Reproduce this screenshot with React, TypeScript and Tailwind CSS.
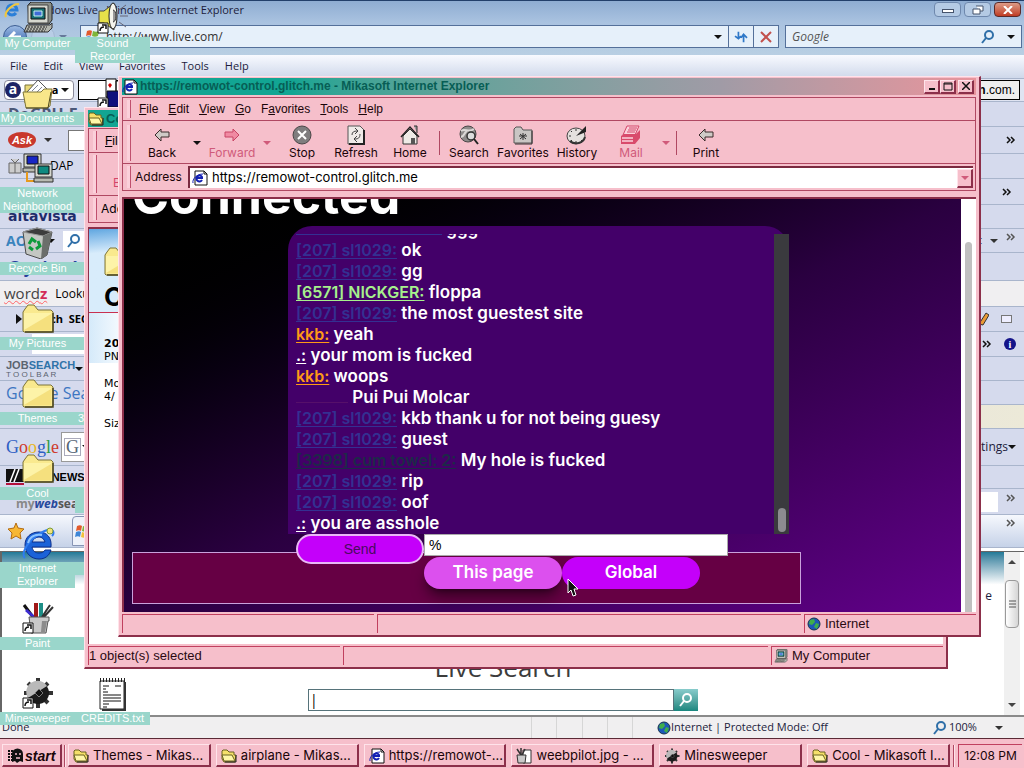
import type { ReactNode } from "react"

const ui = "font-['Liberation_Sans',Arial,sans-serif]"
const inter = "font-['Inter',sans-serif]"
const segoe = "font-['Open_Sans','Noto_Sans',sans-serif]"

/* ---------- icons ---------- */

function FolderIcon({ size = 32 }: { size?: number }) {
    return (
        <svg width={size} height={size} viewBox="0 0 32 32">
            <path d="M1 10l2-3 3-4h6l4 5h13l2 2v19l-1 1H2l-1-1z" fill="#f9e98e" stroke="#7d7438" />
            <path d="M2 11h27v17H2z" fill="#fdf3a8" />
            <path d="M2 28L29 12v16z" fill="#f1d76c" opacity=".7" />
            <path d="M31 11v19H3" fill="none" stroke="#4b4620" strokeWidth="1.5" />
        </svg>
    )
}

function OpenFolderIcon() {
    return (
        <svg width="16" height="16" viewBox="0 0 16 16">
            <path d="M1 3l1-1h4l2 2h5v3h2l-1 7H3L1 11z" fill="#f6e06a" stroke="#6b6220" />
            <path d="M3 13L1 7h10l3 6z" fill="#fff7a8" stroke="#6b6220" />
            <path d="M15 7v7H4" fill="none" stroke="#222" />
        </svg>
    )
}

function DocsIcon() {
    return (
        <svg width="32" height="32" viewBox="0 0 32 32">
            <path d="M3 8h10l2 4v14H3z" fill="#e9d978" stroke="#7d7438" />
            <path d="M5 15L16 3l12 12-8 10z" fill="#fff" stroke="#555" />
            <path d="M10 14l6-6m-3 9l7-7m-4 9l6-6" stroke="#7d8496" />
            <path d="M1 15h18l3-3h8l-2 17-3 2H4z" fill="#f8e68a" stroke="#7d7438" />
            <path d="M4 31h22l3-16" fill="none" stroke="#4b4620" />
        </svg>
    )
}

function ComputerIcon({ size = 32 }: { size?: number }) {
    return (
        <svg width={size} height={size} viewBox="0 0 32 32">
            <path d="M6 3l3-3h19l2 2v16l-3 4H7z" fill="#8b8f88" stroke="#222" />
            <path d="M6 3h20v18H6z" fill="#d6d8cf" stroke="#444" />
            <path d="M9 6h14v11H9z" fill="#166f74" stroke="#111" />
            <path d="M12 9h8v5h-8z" fill="#3e6bd6" stroke="#c8f4f0" />
            <path d="M5 23h23l2-2v5l-4 4H2z" fill="#b3b5ad" stroke="#333" />
            <path d="M6 25h19M5 27h19M4 29h19" stroke="#222" strokeDasharray="2 1" />
        </svg>
    )
}

function NetworkIcon() {
    return (
        <svg width="32" height="32" viewBox="0 0 32 32">
            <path d="M2 2h17v13H2z" fill="#d6d8cf" stroke="#333" />
            <path d="M5 4h11v8H5z" fill="#1726c4" stroke="#111" />
            <path d="M1 16h18v4H1z" fill="#b8bab2" stroke="#333" />
            <path d="M5 20v9h9" fill="none" stroke="#e79a1c" strokeWidth="2" />
            <path d="M13 12h17v13H13z" fill="#d6d8cf" stroke="#333" />
            <path d="M16 14h11v8H16z" fill="#0f8a80" stroke="#111" />
            <path d="M12 26h19v4H12z" fill="#b8bab2" stroke="#333" />
        </svg>
    )
}

function RecycleIcon() {
    return (
        <svg width="32" height="32" viewBox="0 0 32 32">
            <path d="M1 5L15 1l15 4-5 23-6 4-15-5z" fill="#c4c7c3" stroke="#4b4b4b" />
            <path d="M1 5l14-4 15 4-9 4z" fill="#3c3c3c" stroke="#999" />
            <path d="M21 9l9-4-5 23-6 4z" fill="#6b6e6b" />
            <path d="M7 17l3-5 4 3M16 14l2 5-4 3M11 23l-4-3" fill="none" stroke="#0c9a3a" strokeWidth="3" />
        </svg>
    )
}

function BigIeIcon() {
    return (
        <svg width="34" height="34" viewBox="0 0 34 34">
            <path d="M30 20H11c1 4 3 6 7 6 3 0 5-1 6-3h6c-2 6-6 9-12 9C10 32 4 26 4 18S10 5 18 5s13 6 12 15zM11 15h13c-1-3-3-5-6-5s-6 2-7 5z" fill="#1b62d8" stroke="#0c2f8c" />
            <path d="M4 31c-4-4 1-14 10-21S30 1 32 4c1 2 0 4-1 5" fill="none" stroke="#2f7cf0" strokeWidth="2" />
            <path d="M7 16C9 9 15 7 21 8" fill="none" stroke="#8cc3ff" strokeWidth="2" />
            <circle cx="29" cy="4" r="3" fill="#f4e27a" stroke="#7a9d3a" />
        </svg>
    )
}

function PageIeIcon({ size = 16 }: { size?: number }) {
    return (
        <svg width={size} height={size} viewBox="0 0 16 16">
            <path d="M3 1h9l3 3v11H3z" fill="#fff" stroke="#111" />
            <path d="M12 1v3h3" fill="none" stroke="#111" />
            <path d="M10 10a3 3 0 1 1 0-3v1H4" fill="none" stroke="#1320b4" strokeWidth="2" />
            <path d="M1 13C0 9 5 4 11 4" fill="none" stroke="#1320b4" />
        </svg>
    )
}

function IeSmall() {
    return (
        <svg width="16" height="16" viewBox="0 0 16 16">
            <path d="M12 11a5 5 0 1 1 1-3H4" fill="none" stroke="#2b7fd8" strokeWidth="3" />
            <path d="M2 15C0 11 7 2 15 2" fill="none" stroke="#f0c63c" strokeWidth="2" />
        </svg>
    )
}

function ShortcutMark() {
    return (
        <g>
            <path d="M0 21h10v10H0z" fill="#fff" stroke="#111" />
            <path d="M2 29c0-3 1-4 4-4M4 23h4v4" fill="none" stroke="#111" strokeWidth="1.5" />
        </g>
    )
}

function SpeakerIcon() {
    return (
        <svg width="32" height="32" viewBox="-1 0 32 32">
            <path d="M1 9h5l10-8v27l-10-7H1z" fill="#e6e04a" stroke="#444" />
            <ellipse cx="15" cy="14" rx="4" ry="13" fill="#f4f4ec" stroke="#222" />
            <path d="M15 8a3 6 0 0 1 0 12" fill="#999" stroke="#333" />
            <path d="M21 8l7-5M22 14h8M21 20l7 5" stroke="#667" />
            <ShortcutMark />
        </svg>
    )
}

function CardsIcon() {
    return (
        <svg width="32" height="32" viewBox="-1 0 32 32">
            <path d="M8 2h10v18H8zM18 4h11v14H18z" fill="#fff" stroke="#111" />
            <path d="M10 8l2-2 2 2-2 3zM20 8l2-2 2 2-2 3z" fill="#c00" />
            <path d="M9 14h20v16H9z" fill="#10107c" stroke="#111" />
            <ShortcutMark />
        </svg>
    )
}

function PaintIcon() {
    return (
        <svg width="32" height="32" viewBox="-1 0 32 32">
            <path d="M1 3l9 12" stroke="#111" strokeWidth="3" />
            <path d="M3 8l9 8" stroke="#3c2bd0" strokeWidth="3" />
            <path d="M13 1v14" stroke="#a01818" strokeWidth="4" />
            <path d="M18 1v14" stroke="#1e8f87" strokeWidth="4" />
            <path d="M30 5L20 16M27 3l-8 12" stroke="#333" strokeWidth="2" />
            <path d="M6 15h20v4h-1l-2 12H8z" fill="#c9c9c9" stroke="#555" />
            <path d="M19 19h5l-2 11h-4z" fill="#8c8c8c" />
            <ShortcutMark />
        </svg>
    )
}

function MineIcon({ size = 32, mark = true }: { size?: number; mark?: boolean }) {
    return (
        <svg width={size} height={size} viewBox="-1 0 32 32">
            <path d="M15 1v30M1 16h29M5 6l20 20M25 6L5 26" stroke="#333" strokeWidth="4" />
            <circle cx="15" cy="16" r="11" fill="#1c1c1c" />
            <path d="M5 21A11 11 0 0 1 24 9z" fill="#b9b9b9" />
            <path d="M12 16l4-4 4 4-4 4z" fill="#111" stroke="#777" />
            {mark && <ShortcutMark />}
        </svg>
    )
}

function NotepadIcon() {
    return (
        <svg width="32" height="34" viewBox="0 0 32 34">
            <path d="M3 4h24v28H3z" fill="#fff" stroke="#222" />
            <path d="M28 5v28H5" fill="none" stroke="#333" strokeWidth="2" />
            <path d="M3 3h25" stroke="#222" strokeWidth="4" strokeDasharray="1 2" />
            <path d="M6 9h6M18 9h6M6 12h3M6 15h5M6 18h18M6 21h18M6 24h18M6 27h6M6 30h4" stroke="#111" />
        </svg>
    )
}

function ArrowIcon({ flip = false, fill = "#cfcac6", line = "#3a2a2a" }: { flip?: boolean; fill?: string; line?: string }) {
    return (
        <svg width="16" height="20" viewBox="0 0 16 20">
            <path d={flip ? "M15 10L9 4v3H1v5h8v4z" : "M1 10l6-6v3h8v5H7v4z"} fill={fill} stroke={line} />
        </svg>
    )
}

function StopIcon() {
    return (
        <svg width="20" height="20" viewBox="0 0 20 20">
            <circle cx="10" cy="10" r="9" fill="#7f7d7e" stroke="#4b4647" />
            <path d="M6 6l8 8M14 6l-8 8" stroke="#fff" strokeWidth="2" />
        </svg>
    )
}

function RefreshIcon() {
    return (
        <svg width="18" height="20" viewBox="0 0 18 20">
            <path d="M1 1h12l4 4v14H1z" fill="#efebe8" stroke="#555" />
            <path d="M17 5v14H2" fill="none" stroke="#222" strokeWidth="2" />
            <path d="M5 10c0-3 2-4 5-4M8 3l3 3-3 3M13 9c0 4-2 5-5 5M10 11l-3 3 3 3" fill="none" stroke="#444" />
        </svg>
    )
}

function HomeIcon() {
    return (
        <svg width="20" height="20" viewBox="0 0 20 20">
            <path d="M3 11v8h14v-8l-7-7z" fill="#eeeae6" stroke="#333" />
            <path d="M14 1h3v7" fill="#999" stroke="#333" />
            <path d="M1 12l9-10 9 10" fill="none" stroke="#222" strokeWidth="1.5" />
            <path d="M11 13h4v6h-4z" fill="#555" />
        </svg>
    )
}

function SearchToolIcon() {
    return (
        <svg width="20" height="20" viewBox="0 0 20 20">
            <circle cx="9" cy="9" r="8" fill="#8f8c8b" stroke="#4b4647" />
            <path d="M2 6c4-3 8 2 13-2M2 12c4-1 3-5 6-6" fill="none" stroke="#dcd9d7" strokeWidth="2" />
            <circle cx="12" cy="11" r="4" fill="#ddd" stroke="#333" strokeWidth="1.5" />
            <path d="M15 14l4 5" stroke="#222" strokeWidth="2" />
        </svg>
    )
}

function FavIcon() {
    return (
        <svg width="20" height="20" viewBox="0 0 20 20">
            <path d="M1 18V4l2-2h5l2 3h9v13z" fill="#c9c6c4" stroke="#555" />
            <path d="M19 6v13H2" fill="none" stroke="#333" />
            <path d="M10 8v7M6 11h8M7 9l6 5M13 9l-6 5" stroke="#333" />
        </svg>
    )
}

function HistoryIcon() {
    return (
        <svg width="22" height="20" viewBox="0 0 22 20">
            <ellipse cx="10" cy="11" rx="9" ry="8" fill="#e4e1de" stroke="#444" />
            <path d="M19 12a9 8 0 0 1-15 4" fill="none" stroke="#333" strokeWidth="2" />
            <path d="M10 11L20 1v6z" fill="#222" />
            <path d="M10 4v2M3 11h2M10 16v2M5 6l1 1M5 16l1-1M15 15l1 1" stroke="#333" />
        </svg>
    )
}

function MailIcon() {
    return (
        <svg width="22" height="20" viewBox="0 0 22 20">
            <path d="M7 1h12l-4 9H3z" fill="#fbd3dc" stroke="#d4466a" />
            <path d="M9 3h8M8 5h8M7 7h8" stroke="#d4466a" />
            <path d="M1 11l3-2h12l4-4v8l-5 6H1z" fill="#d94b6c" />
            <path d="M2 13h11M2 16h11" stroke="#fbd3dc" strokeWidth="1.5" />
        </svg>
    )
}

function GlobeIcon({ size = 14 }: { size?: number }) {
    return (
        <svg width={size} height={size} viewBox="0 0 14 14">
            <circle cx="7" cy="7" r="6" fill="#1c58b8" stroke="#16324c" />
            <path d="M3 3l4-1 1 3-3 3-3-1zM9 6l3 1-2 5-3-2z" fill="#3fae4a" />
        </svg>
    )
}

function Magnifier({ stroke = "#2f6fa8" }: { stroke?: string }) {
    return (
        <svg width="14" height="14" viewBox="0 0 14 14">
            <circle cx="8" cy="5" r="4" fill="none" stroke={stroke} strokeWidth="2" />
            <path d="M5 8l-4 5" stroke={stroke} strokeWidth="2" />
        </svg>
    )
}

function WinFlag() {
    return (
        <svg width="15" height="15" viewBox="0 0 15 15">
            <path d="M2 2c2-1 4-1 5 0L6 7c-1-1-3-1-5 0z" fill="#e2592c" />
            <path d="M8 2c2 1 4 1 6 0l-1 5c-2 1-4 1-6 0z" fill="#7fb53a" />
            <path d="M1 8c2-1 4-1 5 0l-1 5c-1-1-3-1-5 0z" fill="#3f86d6" />
            <path d="M7 8c2 1 4 1 6 0l-1 5c-2 1-4 1-6 0z" fill="#f3c23a" />
        </svg>
    )
}

function Caret({ color = "#111" }: { color?: string }) {
    return (
        <svg width="8" height="4" viewBox="0 0 8 4">
            <path d="M0 0h8L4 4z" fill={color} />
        </svg>
    )
}

/* ---------- wallpaper: the browser behind everything ---------- */

function Row({ h, children, right, bg = "bg-[#d5daed]" }: { h: string; children?: ReactNode; right?: ReactNode; bg?: string }) {
    return (
        <div className={`flex shrink-0 items-center justify-between overflow-hidden border-b border-[#a9b5cc] ${h} ${bg}`}>
            <div className="flex items-center whitespace-nowrap pl-2">{children}</div>
            <div className="flex items-center gap-2 whitespace-nowrap pr-2">{right}</div>
        </div>
    )
}

function Chevron({ color = "#111" }: { color?: string }) {
    return (
        <svg width="10" height="8" viewBox="0 0 10 8">
            <path d="M1 1l3 3-3 3M5 1l3 3-3 3" fill="none" stroke={color} strokeWidth="1.5" />
        </svg>
    )
}

function Wallpaper() {
    return (
        <div className={`absolute inset-0 flex flex-col bg-white text-[11px] text-[#1c1c3c] ${segoe}`}>
            <div className="flex h-[22px] shrink-0 items-start justify-between border-t border-[#23406b] bg-linear-to-b from-[#8fadd2] to-[#a9c2e0]">
                <div className="flex items-center gap-2 pt-px pl-1">
                    <IeSmall />
                    <span>Windows Live - Windows Internet Explorer</span>
                </div>
                <div className="flex gap-[3px] pt-px pr-[3px]">
                    <button aria-label="Minimize" className="flex h-[15px] w-[27px] items-end justify-center rounded-sm border border-[#6e88ad] bg-[#b4cae4] pb-[3px]">
                        <span className="h-1 w-3 border border-[#45536b] bg-white" />
                    </button>
                    <button aria-label="Restore" className="flex h-[15px] w-[27px] items-center justify-center rounded-sm border border-[#6e88ad] bg-[#b4cae4]">
                        <svg width="12" height="10" viewBox="0 0 12 10"><path d="M4 1h7v5H8M1 4h7v5H1z" fill="#fff" stroke="#45536b" /></svg>
                    </button>
                    <button aria-label="Close" className="flex h-[15px] w-[27px] items-center justify-center rounded-sm border border-[#5a2a2a] bg-linear-to-b from-[#dc9a86] to-[#bf3a22]">
                        <svg width="10" height="8" viewBox="0 0 10 8"><path d="M1 0l8 8M9 0L1 8" stroke="#fff" strokeWidth="2" /></svg>
                    </button>
                </div>
            </div>
            <div className="flex h-[33px] shrink-0 items-center gap-1.5 bg-linear-to-b from-[#a9c2e0] to-[#b9cfe3] pr-0.5 pb-1">
                <div className="flex w-[74px] items-center gap-1 pl-[3px]">
                    <span className="flex size-6 items-center justify-center rounded-full border border-[#3b5d93] bg-linear-to-b from-[#9dbbe4] to-[#2452a0]">
                        <svg width="14" height="12" viewBox="0 0 14 12"><path d="M7 1L2 6l5 5M2 6h11" fill="none" stroke="#fff" strokeWidth="3" /></svg>
                    </span>
                    <span className="size-6 rounded-full border border-[#a3b7d2] bg-[#b8cde6]" />
                    <Caret color="#66799a" />
                </div>
                <div className="flex h-[23px] flex-1 items-center border border-[#54709a] bg-[#e6f0fa]">
                    <div className="flex flex-1 items-center gap-1.5 pl-1 text-xs">
                        <WinFlag />
                        <span className="text-[#333]">http://www.live.com/</span>
                    </div>
                    <span className="pr-1.5"><Caret /></span>
                    <button aria-label="Reload" className="flex h-full w-[25px] items-center justify-center border-l border-[#54709a]">
                        <svg width="14" height="12" viewBox="0 0 16 14"><path d="M5 1v8M1 6l4 3 3-3M11 13V5M8 8l3-4 4 4" fill="none" stroke="#2f78c8" strokeWidth="2" /></svg>
                    </button>
                    <button aria-label="Stop" className="flex h-full w-[25px] items-center justify-center border-l border-[#54709a]">
                        <svg width="12" height="12" viewBox="0 0 12 12"><path d="M1 1l10 10M11 1L1 11" stroke="#c2504c" strokeWidth="2" /></svg>
                    </button>
                </div>
                <div className="flex h-[23px] w-[237px] items-center gap-3 border border-[#54709a] bg-[#e6f0fa] px-1.5 text-xs">
                    <input aria-label="Search" placeholder="Google" className="min-w-0 flex-1 italic placeholder:text-[#555]" />
                    <Magnifier />
                    <Caret />
                </div>
            </div>
            <div className="flex h-[24px] shrink-0 items-center gap-4 border-b border-[#a9b5cc] bg-linear-to-b from-[#f8faff] to-[#cfd8ea] pl-[10px]">
                <span>File</span><span>Edit</span><span>View</span><span>Favorites</span><span>Tools</span><span>Help</span>
            </div>
            <Row h="h-[23px]" bg="bg-[#dfe4f2]" right={<span className={`-mr-1 flex h-5 items-center border border-black bg-[#eee] px-1 text-[12px] font-bold text-black ${ui}`}>amazon<span className="font-normal">.com.</span></span>}>
                <div className="-ml-1 flex h-5 w-[70px] items-center justify-between rounded border border-[#889] bg-white pr-1">
                    <span className="flex size-4 items-center justify-center rounded-full bg-[#1d2466] pb-0.5 text-sm leading-none font-bold text-white">a</span>
                    <b className="pl-7 text-black">a</b>
                    <Caret />
                </div>
                <div className="ml-1 h-5 w-10 border border-black bg-white" />
            </Row>
            <Row h="h-[25px]"><b className="text-base leading-4 text-[#4b5878]">DoGPU-E</b></Row>
            <Row h="h-[27px]" right={<Chevron />}>
                <span className={`flex h-4 w-7 items-center justify-center rounded-[50%] bg-[#c8382c] text-[11px] font-bold text-white italic ${ui}`}>Ask</span>
                <span className="px-2"><Caret color="#333" /></span>
                <span className="ml-2 h-[21px] w-10 border border-[#777] bg-white" />
            </Row>
            <Row h="h-[25px]">
                <svg width="14" height="16" viewBox="0 0 14 16"><path d="M1 5h12v10H1zM7 5v10M3 1l4 4 4-4" fill="#ccc" stroke="#666" /></svg>
                <span className="pl-[28px] text-xs text-black">DAP</span>
            </Row>
            <Row h="h-[26px]" right={<span className="pr-1"><Chevron /></span>}>
                <svg width="80" height="20" viewBox="0 0 80 20"><path d="M0 5h12l-6 4zM18 5h12v5H18z" fill="#c8202c" /><path d="M69 9l3-3 3 3" fill="none" stroke="#222" /></svg>
            </Row>
            <Row h="h-[24px]"><b className="text-[14px] text-[#1f2d6b] font-['DejaVu_Sans',sans-serif]">altavista</b></Row>
            <Row h="h-[24px]" right={<><span>Text</span><Caret color="#333" /><span className="pb-2"><Chevron color="#555" /></span></>}>
                <b className="-ml-0.5 text-[14px] text-[#3a84bd]">AOL</b>
                <span className="pr-2 pl-3"><Caret /></span>
                <span className="flex h-5 w-20 items-center bg-white pl-1"><Magnifier /></span>
            </Row>
            <Row h="h-[28px]"><b className="text-base leading-4 text-[#26409c]">G yahoo!</b></Row>
            <Row h="h-[26px]" bg="bg-[#f0eff1]">
                <span className="-ml-1 text-[15px] text-[#444] underline decoration-red-400 decoration-wavy decoration-1">word<b className="text-[#d32c58]">z</b></span>
                <span className="pl-2 text-xs text-black">Lookup</span>
            </Row>
            <Row h="h-[25px]" right={<>
                <svg width="10" height="16" viewBox="0 0 10 16"><path d="M0 13l7-11 3 2-6 10z" fill="#e99a35" stroke="#333" /></svg>
                <span className="mx-1 h-2 w-[11px] border border-[#777] bg-[#eef]" />
            </>}>
                <svg className="ml-2" width="6" height="10" viewBox="0 0 6 10"><path d="M0 0l6 5-6 5z" fill="#111" /></svg>
                <b className="pl-1 text-black">Search&nbsp; SEO</b>
            </Row>
            <Row h="h-[25px]" right={<><Chevron /><span className="ml-1 flex size-3 items-center justify-center rounded-full bg-[#14148a] text-[10px] font-bold text-white font-['Liberation_Serif',serif]">i</span></>}>
                <span className="ml-6 h-5 w-32 bg-white" />
            </Row>
            <Row h="h-[24px]">
                <div className={`-ml-0.5 text-[#5b6470] ${ui}`}>
                    <div className="text-[11px] leading-3 font-bold">JOB<span className="text-[#2f73a8]">SEARCH</span></div>
                    <div className="text-[8px] leading-2">T O O L B A R</div>
                </div>
                <span className="pr-2"><Caret /></span>
                <span className="h-5 w-20 bg-white" />
            </Row>
            <Row h="h-[24px]"><span className="-ml-0.5 text-base leading-5 text-[#3d76c2]">Google Search</span></Row>
            <Row h="h-[24px]" bg="bg-linear-to-r from-[#d5daed] to-[#ece9d8]" />
            <Row h="h-[37px]" right={<span className="flex items-center text-xs">Settings<Caret /></span>}>
                <span className="-ml-0.5 text-[18px] font-['Liberation_Serif',serif]">
                    <span className="text-[#2f5fc4]">G</span><span className="text-[#cf3b2c]">o</span><span className="text-[#e8b51e]">o</span><span className="text-[#2f5fc4]">g</span><span className="text-[#2f9a48]">l</span><span className="text-[#cf3b2c]">e</span>
                </span>
                <span className="ml-0.5 flex h-[30px] w-20 items-center border border-[#999] bg-white pl-0.5">
                    <span className="border border-[#aab] px-px text-[18px] leading-4 text-[#567] font-['Liberation_Serif',serif]">G</span>
                    <span className="pl-px"><Caret /></span>
                </span>
            </Row>
            <Row h="h-[23px]">
                <svg className="-ml-0.5" width="18" height="17" viewBox="0 0 18 17"><path d="M0 0h18v13H0z" fill="#111" /><path d="M4 13L9 0M8 13l5-13" stroke="#fff" strokeWidth="1.5" /><path d="M0 14h18v2H0z" fill="#b3123c" /></svg>
                <b className={`pl-0.5 text-[11px] text-black ${ui}`}>FOX NEWS</b>
            </Row>
            <Row h="h-[26px]" right={<><span className="h-5 w-16 bg-white" /><span className="pb-2"><Chevron color="#555" /></span></>}>
                <span className="pt-1 pl-2 text-xs font-bold text-[#888]">my<i className="text-[#27489c]">web</i><span className="text-[#555]">search</span></span>
            </Row>
            <Row h="h-[33px]" bg="bg-linear-to-b from-[#f6f8fd] to-[#c6d2e8]" right={<span className="pb-4"><Chevron color="#555" /></span>}>
                <svg width="16" height="18" viewBox="0 0 16 16"><path d="M8 0l2 5 6 1-4 4 1 6-5-3-5 3 1-6-4-4 6-1z" fill="#f7b733" stroke="#b36b12" /></svg>
                <span className="ml-12 flex h-[30px] w-60 items-center rounded-t border border-[#8794b4] bg-[#eef2fa] pl-0.5"><WinFlag /></span>
            </Row>
            <div className="mt-[3px] flex min-h-0 flex-1 border-t border-l-2 border-[#666] bg-white">
                <div className="flex min-w-0 flex-1 flex-col items-center overflow-hidden bg-linear-to-b from-[#1f7a98] from-0% via-white via-20% to-white">
                    <div className={`self-end pt-9 pr-3 text-xs ${segoe}`}>e</div>
                    <div className="mt-auto text-[26px] leading-7 text-[#3c3c3c]">Live Search</div>
                    <div className="mt-2 mb-1 flex h-[22px] w-[390px]">
                        <input aria-label="Live Search" className="min-w-0 flex-1 border border-[#56737a] px-px text-sm text-black" defaultValue="|" />
                        <button aria-label="Go" className="flex w-6 items-center justify-center bg-linear-to-b from-[#8cc] to-[#17877f]"><Magnifier stroke="#fff" /></button>
                    </div>
                </div>
                <div className="mr-1 flex w-4 flex-col items-center bg-[#f0f0f0] py-2">
                    <span className="rotate-180"><Caret color="#444" /></span>
                    <span className="mt-4 flex h-12 w-3.5 items-center justify-center rounded-sm border border-[#999] bg-linear-to-r from-white to-[#d5d5d5]">
                        <svg width="7" height="8" viewBox="0 0 7 8"><path d="M0 1h7M0 4h7M0 7h7" stroke="#555" /></svg>
                    </span>
                    <span className="mt-auto"><Caret color="#444" /></span>
                </div>
            </div>
            <div className="flex h-[23px] shrink-0 items-center border-t-2 border-[#8a8a8a] bg-[#f0eff0]">
                <span className="flex-1 pl-0.5">Done</span>
                <div className="flex h-full w-[150px] divide-x divide-[#d6d6d6]">
                    <span className="flex-1" /><span className="flex-1" /><span className="flex-1" /><span className="flex-1" /><span className="flex-1" /><span className="flex-1" />
                </div>
                <div className="flex w-[276px] items-center"><GlobeIcon /><span>Internet | Protected Mode: Off</span></div>
                <div className="flex w-[91px] items-center gap-0.5"><Magnifier /><span className="pr-4">100%</span><Caret color="#333" /></div>
            </div>
        </div>
    )
}

/* ---------- desktop icons ---------- */

type DesktopItem = { label: string; icon?: ReactNode; lines?: number }

const desktopItems: DesktopItem[] = [
    { label: "My Computer", icon: <ComputerIcon /> },
    { label: "My Documents", icon: <DocsIcon /> },
    { label: "Network Neighborhood", icon: <NetworkIcon /> },
    { label: "Recycle Bin", icon: <RecycleIcon /> },
    { label: "My Pictures", icon: <FolderIcon /> },
    { label: "Themes", icon: <FolderIcon /> },
    { label: "Cool", icon: <FolderIcon /> },
    { label: "Internet Explorer", icon: <BigIeIcon /> },
    { label: "Paint", icon: <PaintIcon /> },
    { label: "Minesweeper", icon: <MineIcon /> },
    { label: "Sound Recorder", icon: <SpeakerIcon /> },
    { label: "", icon: <CardsIcon /> },
    { label: "", lines: 2 },
    { label: "" },
    { label: "" },
    { label: "3D FlowerBox" },
    { label: "", lines: 2 },
    { label: "" },
    { label: "" },
    { label: "CREDITS.txt", icon: <NotepadIcon /> },
]

function DesktopIcons() {
    return (
        <div className="absolute top-0 left-0 grid auto-cols-[75px] grid-flow-col grid-rows-[repeat(10,75px)]">
            {desktopItems.map((item, i) => (
                <button key={i} className={`flex flex-col items-center text-[11px] leading-[13px] font-medium text-white ${ui}`}>
                    <span className="flex h-[37px] shrink-0 items-start justify-center pt-0.5">{item.icon}</span>
                    <span className={`w-full bg-[#9ad6cb] ${item.label.includes(" R") ? "px-3" : ""} ${item.lines === 2 ? "min-h-[26px]" : "min-h-[13px]"}`}>{item.label}</span>
                </button>
            ))}
        </div>
    )
}

/* ---------- pink windows ---------- */

const raised = "border-t border-l border-t-[#ffe3ea] border-l-[#ffe3ea] border-r-2 border-b-2 border-r-[#8c2f4a] border-b-[#8c2f4a] bg-[#f6bfcb]"

function Grip() {
    return <span className="mr-2 w-1 self-stretch border-r border-[#c0506e] bg-[#fbd0da]" />
}

function StatusBar({ first, icon, zone }: { first?: string; icon: ReactNode; zone: string }) {
    const cell = "flex h-[19px] items-center overflow-hidden border-t border-l border-[#c0405f]"
    return (
        <div className={`flex shrink-0 gap-[3px] px-[3px] py-0.5 text-[13px] text-[#2a0a12] ${ui}`}>
            <div className={`w-[252px] ${cell}`}>{first}</div>
            <div className={`flex-1 ${cell}`} />
            <div className={`w-[172px] gap-1 pl-0.5 ${cell}`}>{icon}{zone}</div>
        </div>
    )
}

function FolderWindow() {
    return (
        <div className={`absolute top-[107px] right-[76px] bottom-[69px] left-[84px] flex flex-col overflow-hidden ${raised}`}>
            <div className={`mx-[3px] mt-0.5 flex h-[17px] shrink-0 items-center gap-0.5 bg-[#12a593] text-[13px] font-bold text-[#075e55] ${ui}`}>
                <OpenFolderIcon />Cool
            </div>
            <div className="mx-[3px] mt-px flex shrink-0 flex-col border border-[#b04862]">
                <div className={`flex h-[24px] items-center border-b border-[#b04862] py-0.5 pl-1 text-xs ${ui}`}><Grip /><u>F</u>ile</div>
                <div className={`flex h-[43px] items-end border-b border-[#b04862] py-0.5 pl-1 text-xs text-[#d4466a] ${inter}`}><Grip /><span className="pb-0.5 pl-2">Back</span></div>
                <div className={`flex h-[26px] items-center py-0.5 pl-1 text-xs ${inter}`}><Grip /><span className="-ml-1">Address</span></div>
            </div>
            <div className="mx-[3px] mt-1 min-h-0 flex-1 overflow-hidden border-t-2 border-l border-[#8c2f4a] bg-white text-[11px] leading-[13px] text-black font-['DejaVu_Sans',sans-serif]">
                <div className="border-b border-[#c83050] bg-linear-to-br from-[#5ea6e0] to-[#d8ecfb] to-15% pt-4 pl-[15px]">
                    <FolderIcon />
                    <div className={`pt-1 text-[26px] leading-[31px] font-bold ${inter}`}>Cool</div>
                </div>
                <div className="w-full bg-linear-to-r from-[#d5eafa] to-white to-5% pt-6 pl-[15px]">
                    <b>20</b>
                    <p>PNG Image</p>
                </div>
                <p className="pt-3.5 pl-[15px]">Modified:<br />4/</p>
                <p className="pt-3.5 pl-[15px]">Size:</p>
            </div>
            <StatusBar first="1 object(s) selected" icon={<ComputerIcon size={14} />} zone="My Computer" />
        </div>
    )
}

function Tool({ icon, label, off }: { icon: ReactNode; label: string; off?: boolean }) {
    return (
        <button className={`flex w-[54px] flex-col items-center ${off ? "text-[#d05a7a]" : "text-[#1a0509]"}`}>
            <span className="flex h-5 items-center">{icon}</span>
            <span className="leading-4">{label}</span>
        </button>
    )
}

function Drop({ label, off }: { label: string; off?: boolean }) {
    return (
        <button aria-label={label} className="flex w-4 items-center justify-center">
            <Caret color={off ? "#d05a7a" : "#111"} />
        </button>
    )
}

const menus = [["F", "ile"], ["E", "dit"], ["V", "iew"], ["G", "o"]]

type Message = { name: string; style: string; text: string }

const blue = "text-[#343092]"
const messages: Message[] = [
    { name: "", style: "inline-block w-[146px] border-b border-[#343092]", text: "ggg" },
    { name: "[207] sl1029:", style: blue, text: "ok" },
    { name: "[207] sl1029:", style: blue, text: "gg" },
    { name: "[6571] NICKGER:", style: "text-[#a6f08c]", text: "floppa" },
    { name: "[207] sl1029:", style: blue, text: "the most guestest site" },
    { name: "kkb:", style: "text-[#ff9a16]", text: "yeah" },
    { name: ".:", style: "text-white", text: "your mom is fucked" },
    { name: "kkb:", style: "text-[#ff9a16]", text: "woops" },
    { name: "", style: "inline-block w-[52px] border-b border-[#56106a]", text: "Pui Pui Molcar" },
    { name: "[207] sl1029:", style: blue, text: "kkb thank u for not being guesy" },
    { name: "[207] sl1029:", style: blue, text: "guest" },
    { name: "[3398] cum towel: 2:", style: "text-[#1c2a48]", text: "My hole is fucked" },
    { name: "[207] sl1029:", style: blue, text: "rip" },
    { name: "[207] sl1029:", style: blue, text: "oof" },
    { name: ".:", style: "text-white", text: "you are asshole" },
]

function ChatPage() {
    return (
        <div className={`relative min-w-0 flex-1 overflow-hidden bg-linear-to-br from-black from-5% via-[#2a0040] via-50% to-[#62008a] text-white ${inter}`}>
            <h1 className="-mt-[32px] pl-2 text-[50px] leading-[59px] font-bold">Connected</h1>
            <div className="ml-[164px] flex h-[308px] w-[501px] rounded-t-3xl bg-[#430069] pt-2 pl-2">
                <div className="flex min-w-0 flex-1 flex-col justify-end overflow-hidden text-[17px] leading-[21px] font-semibold">
                    {messages.map((m, i) => (
                        <p key={i} className="h-[21px] shrink-0 whitespace-nowrap">
                            <span className={`text-[16px] underline underline-offset-2 ${m.style}`}>{m.name}</span> {m.text}
                        </p>
                    ))}
                </div>
                <div className="flex w-[15px] flex-col justify-end bg-[#3a3a3e] pr-[3px] pb-0.5 pl-1">
                    <span className="h-6 rounded-full bg-[#8c8c90]" />
                </div>
            </div>
            <form className="mt-[18px] ml-2 flex h-[52px] w-[669px] items-start border border-[#c9a2dc] bg-[#660044] pl-[163px]">
                <button type="button" className={`-mt-[19px] h-[30px] w-32 rounded-full border-2 border-[#e9b8f6] bg-[#c400fa] text-[14px] text-[#4a0a60] ${ui}`}>Send</button>
                <div className="-mt-[19px] w-[304px]">
                    <input aria-label="Message" defaultValue="%" className={`block h-[22px] w-full border border-[#aaa] bg-white px-1 text-[14px] text-black ${ui}`} />
                    <div className="mt-px flex text-[17px] font-semibold">
                        <button type="button" className="h-8 w-[138px] rounded-full bg-[#dc50ee] shadow-lg shadow-black/50">This page</button>
                        <button type="button" className="h-8 w-[138px] rounded-full bg-[#c400fa]">Global</button>
                    </div>
                </div>
            </form>
        </div>
    )
}

function BrowserWindow() {
    const sys = "flex h-[14px] w-4 items-center justify-center border-t border-l border-r-2 border-b-2 border-t-[#ffe3ea] border-l-[#ffe3ea] border-r-[#8c2f4a] border-b-[#8c2f4a] bg-[#f6bfcb]"
    return (
        <div className={`absolute top-[76px] right-[43px] bottom-[101px] left-[118px] flex flex-col ${raised}`}>
            <div className="mx-[3px] mt-px flex h-[17px] shrink-0 items-center bg-linear-to-r from-[#12a593] from-20% via-[#a09ba6] via-70% to-[#e8949c] pr-0.5">
                <PageIeIcon />
                <span className={`flex-1 pb-0.5 pl-0.5 text-xs font-bold text-[#075e55] ${ui}`}>https://remowot-control.glitch.me - Mikasoft Internet Explorer</span>
                <button aria-label="Minimize" className={sys}><svg width="10" height="8" viewBox="0 0 10 8"><path d="M2 7h6" stroke="#111" strokeWidth="2" /></svg></button>
                <button aria-label="Maximize" className={sys}><svg width="10" height="9" viewBox="0 0 10 9"><path d="M1 1h8v7H1zM1 2h8" fill="none" stroke="#111" /></svg></button>
                <button aria-label="Close" className={`ml-0.5 ${sys}`}><svg width="8" height="8" viewBox="0 0 8 8"><path d="M0 0l8 8M8 0L0 8" stroke="#111" strokeWidth="1.5" /></svg></button>
            </div>
            <div className="mx-[3px] mt-[2px] flex shrink-0 flex-col border border-[#b04862] text-xs text-[#1a0509]">
                <div className={`flex h-[23px] items-center gap-[10px] border-b border-[#b04862] py-0.5 pl-1 ${ui}`}>
                    <span className="-mr-[10px] flex self-stretch"><Grip /></span>
                    {menus.map(([k, rest]) => <span key={k}><u>{k}</u>{rest}</span>)}
                    <span>F<u>a</u>vorites</span>
                    <span><u>T</u>ools</span>
                    <span><u>H</u>elp</span>
                </div>
                <div className={`flex h-[43px] items-center border-b border-[#b04862] pt-1 pb-0.5 pl-1 ${inter}`}>
                    <span className="-mr-1 flex self-stretch"><Grip /></span>
                    <Tool icon={<ArrowIcon />} label="Back" />
                    <Drop label="Back list" />
                    <Tool icon={<ArrowIcon flip fill="#f08aa2" line="#c84464" />} label="Forward" off />
                    <Drop label="Forward list" off />
                    <Tool icon={<StopIcon />} label="Stop" />
                    <Tool icon={<RefreshIcon />} label="Refresh" />
                    <Tool icon={<HomeIcon />} label="Home" />
                    <span className="mx-0.5 h-6 w-px bg-[#b04862]" />
                    <Tool icon={<SearchToolIcon />} label="Search" />
                    <Tool icon={<FavIcon />} label="Favorites" />
                    <Tool icon={<HistoryIcon />} label="History" />
                    <Tool icon={<MailIcon />} label="Mail" off />
                    <Drop label="Mail list" off />
                    <span className="mx-0.5 h-6 w-px bg-[#b04862]" />
                    <Tool icon={<ArrowIcon />} label="Print" />
                </div>
                <div className={`flex h-[26px] items-center pr-0.5 pl-1 ${inter}`}>
                    <span className="-mr-1 flex self-stretch py-0.5"><Grip /></span>
                    <label htmlFor="address" className="pr-1.5">Address</label>
                    <div className="flex h-[22px] flex-1 items-center border-t-2 border-l-2 border-[#7a2a40] bg-white pl-0.5">
                        <PageIeIcon />
                        <input id="address" defaultValue="https://remowot-control.glitch.me" className="min-w-0 flex-1 pl-1 text-[13px] text-black" />
                        <button aria-label="Address list" className={`flex h-[19px] w-4 items-center justify-center ${raised}`}><Caret color="#d05a7a" /></button>
                    </div>
                </div>
            </div>
            <div className="mx-[3px] mt-1.5 flex min-h-0 flex-1 border-t-2 border-l-2 border-[#8c2f4a]">
                <ChatPage />
                <div className="w-[15px] bg-white px-1 pt-[43px]">
                    <div className="h-full rounded-t-full bg-[#c0c0c0]" />
                </div>
            </div>
            <StatusBar icon={<GlobeIcon />} zone="Internet" />
        </div>
    )
}

/* ---------- taskbar ---------- */

const tasks = [
    { icon: <OpenFolderIcon />, label: "Themes - Mikas..." },
    { icon: <OpenFolderIcon />, label: "airplane - Mikas..." },
    { icon: <PageIeIcon />, label: "https://remowot-..." },
    { icon: <PaintSmall />, label: "weebpilot.jpg - ..." },
    { icon: <MineIcon size={16} mark={false} />, label: "Minesweeper" },
    { icon: <OpenFolderIcon />, label: "Cool - Mikasoft I..." },
]

function PaintSmall() {
    return (
        <svg width="16" height="16" viewBox="0 0 16 16">
            <path d="M7 2h8v13H7z" fill="#fff" stroke="#333" />
            <path d="M1 1l4 6M5 0v7M9 1L6 7" stroke="#333" strokeWidth="1.5" />
            <path d="M1 7h9l-1 8H2z" fill="#c9c9c9" stroke="#333" />
        </svg>
    )
}

function Taskbar() {
    return (
        <div className={`flex h-[30px] shrink-0 items-center border-t border-[#5a2a36] bg-[#f6bfcb] px-0.5 pt-1 text-[#1a0509] ${inter}`}>
            <button className={`flex h-[23px] w-[60px] items-center pt-0.5 pl-1 text-[14px] font-bold italic ${raised} ${ui}`}>
                <svg width="18" height="16" viewBox="2 0 18 16">
                    <path d="M3 3h5M3 6h5M3 9h5M3 12h5" stroke="#111" strokeDasharray="2 1" strokeWidth="2" />
                    <path d="M7 14V6a5 5 0 0 1 11 0v8l-3-1-3 2-2-2z" fill="#111" />
                    <path d="M10 6h2M14 6h2M11 10h4" stroke="#f6bccb" strokeWidth="1.5" />
                </svg>
                start
            </button>
            <span className="mx-0.5 h-[22px] w-0.5 border-l border-[#b04862] bg-[#ffe3ea]" />
            <div className="flex flex-1 gap-[5px]">
                {tasks.map(t => (
                    <button key={t.label} className={`flex h-[23px] min-w-0 flex-1 items-center gap-1 overflow-hidden pt-0.5 pl-1 text-[13px] whitespace-nowrap ${raised}`}>
                        <span className="shrink-0">{t.icon}</span>{t.label}
                    </button>
                ))}
            </div>
            <span className="mx-[3px] h-[22px] w-0.5 border-l border-[#b04862] bg-[#ffe3ea]" />
            <div className="flex h-[23px] w-16 items-center justify-center border-t border-l border-[#c0405f] text-xs">12:08 PM</div>
        </div>
    )
}

export default function App() {
    return (
        <div className="flex h-screen w-full flex-col overflow-hidden">
            <main className="relative min-h-0 flex-1 overflow-hidden">
                <Wallpaper />
                <DesktopIcons />
                <FolderWindow />
                <BrowserWindow />
                <svg className="absolute top-[578px] left-[567px]" width="12" height="19" viewBox="0 0 12 19">
                    <path d="M1 1v14l3-3 2 6 3-1-2-6h4z" fill="#111" stroke="#fff" />
                </svg>
            </main>
            <Taskbar />
        </div>
    )
}
